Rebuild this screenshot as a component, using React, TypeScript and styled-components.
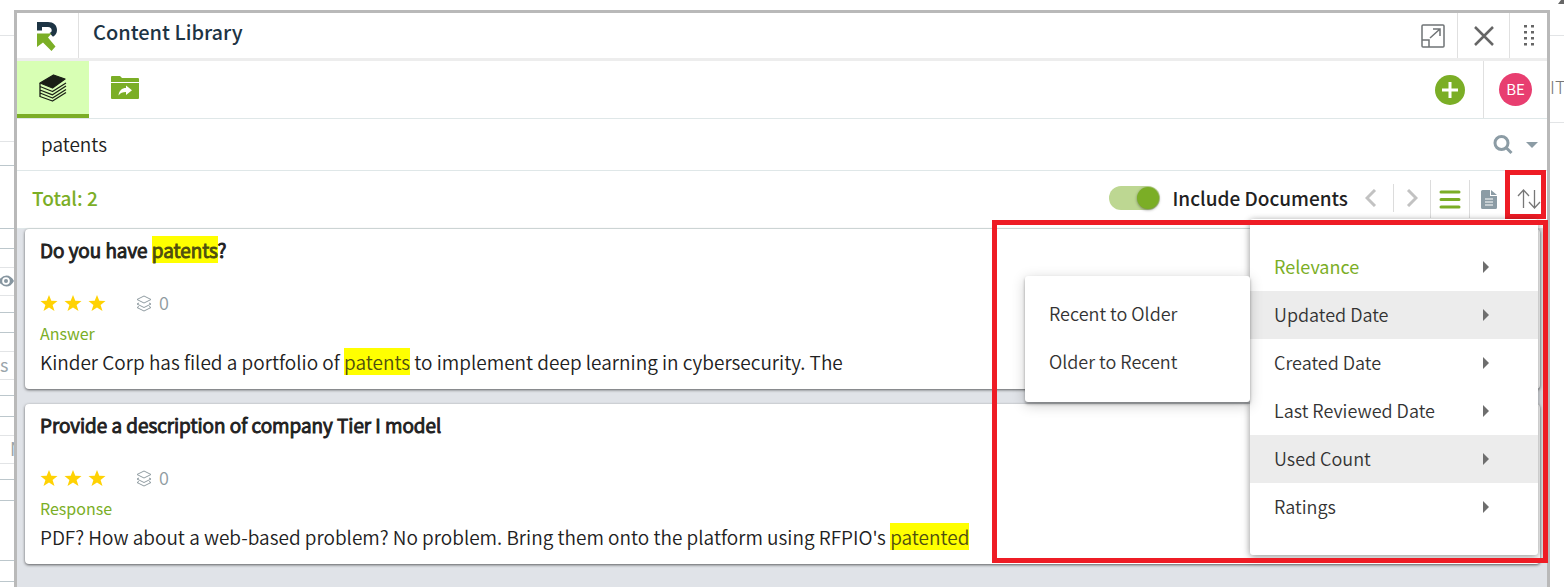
import React from "react";
import styled, { createGlobalStyle, css } from "styled-components";

const green = "#7bae26";

const GlobalStyle = createGlobalStyle`
  *, *::before, *::after { box-sizing: border-box; }
  body {
    margin: 0;
    background: #fff;
    color: #212121;
    font-family: "Noto Sans CJK SC", "Noto Sans", sans-serif;
    font-size: 19px;
    line-height: 24px;
  }
  button, input { font: inherit; color: inherit; }
  h1, h2, p, ul { margin: 0; padding: 0; font: inherit; }
`;

const Page = styled.div`
  display: grid;
  grid-template-columns: 14px minmax(0, 1fr) 14px;
  height: 100vh;
  overflow: hidden;
`;

const Backdrop = styled.div`
  overflow: hidden;
  color: #9aa5ab;
  font-size: 18px;
`;

const Strip = styled.div<{ $h: number; $dark?: boolean; $inset?: boolean }>`
  display: flex;
  align-items: center;
  height: ${(p) => p.$h}px;
  padding: 0 0 3px ${(p) => (p.$inset ? 10 : 0)}px;
  border-bottom: 1px solid ${(p) => (p.$dark ? "#bcc7cc" : "#e2e4e6")};
  white-space: nowrap;
  svg { flex: none; }
`;

const ColumnHead = styled(Strip)`
  padding-top: 16px;
  color: #777;
  font-weight: 300;
`;

const CornerMark = styled.svg`
  display: block;
  margin: 0 0 0 auto;
  align-self: flex-start;
`;

const Panel = styled.main`
  position: relative;
  display: flex;
  flex-direction: column;
  margin-top: 10px;
  border: 3px solid #b9b9b9;
  border-bottom: 0;
  background: #fff;
`;

const Header = styled.header`
  display: flex;
  height: 48px;
  border-bottom: 3px solid #ededed;
`;

const LogoCell = styled.div`
  width: 62px;
  padding: 9px 0 0 18px;
  border-right: 1px solid #e0e0e0;
`;

const Title = styled.h1`
  flex: 1;
  padding: 7px 14px;
  color: #1d3444;
  && {
    font-size: 20px;
    font-weight: 500;
  }
`;

const PlainButton = styled.button`
  display: flex;
  align-items: center;
  justify-content: center;
  padding: 0;
  border: 0;
  background: none;
  cursor: pointer;
`;

const HeaderButton = styled(PlainButton)<{ $w: number; $divided?: boolean }>`
  width: ${(p) => p.$w}px;
  border-left: ${(p) => (p.$divided ? "1px solid #e0e0e0" : "0")};
`;

const TabBar = styled.nav`
  display: flex;
  height: 58px;
  border-bottom: 1px solid #dfe7e8;
`;

const Tab = styled(PlainButton)<{ $active?: boolean }>`
  width: 72px;
  border-bottom: 4px solid ${(p) => (p.$active ? green : "transparent")};
  background: ${(p) => (p.$active ? "#d8ffb4" : "none")};
`;

const TabEnd = styled.div`
  display: flex;
  align-items: center;
  margin-left: auto;
`;

const AddButton = styled(PlainButton)`
  width: 30px;
  height: 30px;
  margin-right: 18px;
  border-radius: 50%;
  background: ${green};
`;

const AvatarCell = styled.div`
  display: flex;
  align-items: center;
  justify-content: center;
  width: 64px;
  height: 100%;
  border-left: 1px solid #e0e0e0;
`;

const Avatar = styled.span`
  width: 33px;
  height: 33px;
  border-radius: 50%;
  background: #e83e70;
  color: #fff;
  font-size: 15px;
  line-height: 32px;
  text-align: center;
`;

const SearchBar = styled.form`
  display: flex;
  align-items: center;
  height: 52px;
  padding: 0 9px 0 24px;
  border-bottom: 1px solid #dfe7e8;
`;

const SearchInput = styled.input`
  flex: 1;
  min-width: 0;
  padding: 0 0 2px;
  border: 0;
  outline: 0;
  background: none;
  font-weight: 350;
`;

const SearchButton = styled(PlainButton)`
  margin-right: 13px;
`;

const Toolbar = styled.div`
  display: flex;
  height: 58px;
  padding-left: 15px;
  border-bottom: 1px solid #dfe7e8;
`;

const Total = styled.p`
  padding-top: 15px;
  color: ${green};
  && { font-weight: 500; }
`;

const Tools = styled.div`
  display: flex;
  align-items: center;
  height: 54px;
  margin-left: auto;
`;

const ToggleLabel = styled.label`
  display: flex;
  align-items: center;
  gap: 12px;
  padding-bottom: 1px;
  font-weight: 500;
`;

const Toggle = styled.input`
  appearance: none;
  width: 51px;
  height: 24px;
  margin: 0;
  padding: 1px;
  border-radius: 12px;
  background: #bdd792;
  display: flex;
  justify-content: flex-end;
  &::before {
    content: "";
    width: 22px;
    height: 22px;
    border-radius: 50%;
    background: ${green};
    box-shadow: 0 1px 3px rgba(0, 0, 0, 0.4);
  }
`;

const Tool = styled(PlainButton)<{ $w: number; $line?: "short" | "tall" }>`
  width: ${(p) => p.$w}px;
  height: ${(p) => (p.$line === "tall" ? 38 : 28)}px;
  border-left: ${(p) => (p.$line ? "1px solid #dcdcdc" : "0")};
  ${(p) => p.$line === "tall" && css`align-self: flex-start; margin-top: 9px;`}
`;

const SortArea = styled.div`
  position: relative;
  display: flex;
  align-self: flex-start;
`;

const SortButton = styled(Tool)`
  padding-left: 2px;
`;

const Highlight = styled.div`
  position: absolute;
  top: -1px;
  right: 1px;
  width: 41px;
  height: 49px;
  border: 5px solid #ee1c25;
  pointer-events: none;
`;

const Region = styled.div`
  position: absolute;
  z-index: 3;
  top: 207px;
  right: -1px;
  width: 556px;
  height: 343px;
  border: 5px solid #ee1c25;
  pointer-events: none;
`;

const menuSurface = css`
  position: absolute;
  list-style: none;
  border-radius: 3px;
  background: #fff;
`;

const Menu = styled.ul`
  ${menuSurface}
  z-index: 2;
  top: 48px;
  right: 9px;
  width: 288px;
  && { padding: 24px 0; }
  box-shadow: 0 1px 6px rgba(0, 0, 0, 0.35), 0 4px 12px rgba(0, 0, 0, 0.12);
`;

const MenuItem = styled.li<{ $shaded?: boolean }>`
  position: relative;
  background: ${(p) => (p.$shaded ? "#ececec" : "none")};
`;

const MenuButton = styled.button<{ $selected?: boolean }>`
  display: flex;
  align-items: center;
  justify-content: space-between;
  width: 100%;
  height: 48px;
  padding: 0 48px 2px 24px;
  border: 0;
  background: none;
  color: ${(p) => (p.$selected ? green : "#333")};
  font-size: 18px;
  font-weight: ${(p) => (p.$selected ? 400 : 350)};
  text-align: left;
  white-space: nowrap;
`;

const SubMenu = styled.ul`
  ${menuSurface}
  top: -15px;
  right: 100%;
  width: 225px;
  && { padding: 14px 0 16px; }
  box-shadow: 0 2px 3px rgba(0, 0, 0, 0.35), 0 3px 14px rgba(0, 0, 0, 0.2);
`;

const Results = styled.section`
  display: flex;
  flex: 1;
  flex-direction: column;
  gap: 15px;
  padding: 0 7px 0 8px;
  background: #e0e3e8;
`;

const Card = styled.article`
  height: 160px;
  padding: 9px 15px;
  border-radius: 4px;
  background: #fff;
  box-shadow: 0 1px 3px rgba(0, 0, 0, 0.6);
`;

const Question = styled.h2`
  && { font-weight: 350; }
  -webkit-text-stroke: 1px currentColor;
`;

const Rating = styled.div`
  display: flex;
  align-items: center;
  gap: 6px;
  height: 24px;
  margin-top: 29px;
  color: #8f9ba1;
  font-size: 18px;
  font-weight: 350;
`;

const Uses = styled.span`
  display: flex;
  align-items: center;
  gap: 7px;
  margin-left: 24px;
  padding-bottom: 3px;
`;

const Kind = styled.p`
  margin-top: 6px;
  color: ${green};
  && { font-size: 16px; }
`;

const Answer = styled.p`
  margin-top: 5px;
  && { font-weight: 350; }
`;

const Mark = styled.mark`
  background: #ff0;
  color: #4f4f10;
`;

const Star = () => (
  <svg width="18" height="18" viewBox="0 -1 18 18" aria-hidden="true">
    <path d="M9 0l2.300 5.800 6.200.2-4.900 3.900 1.900 6.100L9 12.600 3.500 16l1.900-6.100L.5 6l6.200-.2z" fill="#ffd203" />
  </svg>
);

const Layers = () => (
  <svg width="16" height="22" viewBox="0 -5 16 22" fill="none" stroke="#8f9ba1" strokeLinejoin="round" aria-hidden="true">
    <path d="M8 0l7 3.500L8 7 1 3.500zM3 7L1 8l7 3.500L15 8l-2-1M3 10.500l-2 1L8 15l7-3.500-2-1" />
  </svg>
);

const Caret = () => (
  <svg width="7" height="14" viewBox="0 -2 7 14" aria-hidden="true">
    <path d="M0 0l6 6-6 6z" fill="#6e6e6e" />
  </svg>
);

const StackIcon = () => (
  <svg width="28" height="28" viewBox="0 0 28 28" fill="none" stroke="#1a1f16" strokeWidth="1.300" strokeLinejoin="round" aria-hidden="true">
    <path d="M1 9L14.500 1 26 5 13.500 14z" fill="#1a1f16" />
    <path d="M1 9v13.500l12.500 4.500L27 18.500M1 12.500l12.500 5L27 9M1 16l12.500 4.800L27 12M1 19l12.500 5L27 15.500" />
  </svg>
);

const FolderIcon = () => (
  <svg width="28" height="24" viewBox="0 0 28 24" aria-hidden="true">
    <path d="M0 1q0-1 1-1h8l2 2h16q1 0 1 1v3H0zM0 7h28v15q0 1-1 1H1q-1 0-1-1z" fill={green} />
    <path d="M7.500 19.500c.5-5 3.500-7.500 7.500-7.500V9.500l6 4.800-6 4.700v-3c-3.500 0-5.500.8-7.500 3.500z" fill="#fff" />
  </svg>
);

const backdropRows: [number, boolean, React.ReactNode?, boolean?][] = [
  [36, false], [106, false], [24, true], [63, true], [20, true], [19, false],
  [28, false, "eye"], [17, true], [20, true], [19, false], [28, false, "s"], [16, true],
  [21, true], [19, false], [28, false, "N", true], [16, true], [21, true], [60, true], [21, true],
];

const sortOptions = ["Relevance", "Updated Date", "Created Date", "Last Reviewed Date", "Used Count", "Ratings"];

const Eye = () => (
  <svg width="14" height="16" viewBox="0 -2 14 16" aria-hidden="true">
    <path d="M-2 7Q2 1.500 6.500 1.500T14 7q-3 5.500-7.500 5.500T-2 7z" fill="#8796a0" />
    <circle cx="6" cy="7" r="3.800" fill="#fff" />
    <circle cx="6" cy="7" r="2" fill="#8796a0" />
  </svg>
);

function Result({ title, kind, children }: { title: React.ReactNode; kind: string; children: React.ReactNode }) {
  return (
    <Card>
      <Question>{title}</Question>
      <Rating>
        <Star /><Star /><Star />
        <Uses><Layers />0</Uses>
      </Rating>
      <Kind>{kind}</Kind>
      <Answer>{children}</Answer>
    </Card>
  );
}

export default function App() {
  return (
    <Page>
      <GlobalStyle />
      <Backdrop>
        {backdropRows.map(([h, dark, content, inset], i) => (
          <Strip key={i} $h={h} $dark={dark} $inset={inset}>{content === "eye" ? <Eye /> : content}</Strip>
        ))}
      </Backdrop>

      <Panel>
        <Header>
          <LogoCell>
            <svg width="24" height="30" viewBox="0 0 24 30" role="img" aria-label="RFPIO">
              <path d="M2 0h11c5.500 0 9 3 9 8 0 3-1.500 5.500-4 6.800L14.500 11c1.500-.5 2.200-1.500 2.200-2.800C16.700 6.300 15.300 5 13 5H7v3.500H2z" fill="#1d3444" />
              <path d="M2 11.500h14.500L13 15.500l7.500 9-4 4.500-8.500-8.500-6 4.500z" fill={green} />
            </svg>
          </LogoCell>
          <Title>Content Library</Title>
          <HeaderButton $w={49} aria-label="Expand">
            <svg width="24" height="24" viewBox="0 0 24 24" fill="none" stroke="#6f7375" strokeWidth="1.500">
              <rect x="1" y="1" width="22" height="22" rx="1" />
              <path d="M1 16h7v7M9 14L19 5M12 5h7v7" />
            </svg>
          </HeaderButton>
          <HeaderButton $w={52} $divided aria-label="Close">
            <svg width="20" height="20" viewBox="0 0 20 20" stroke="#666" strokeWidth="2.500">
              <path d="M1 1l18 18M19 1L1 19" />
            </svg>
          </HeaderButton>
          <HeaderButton $w={38} $divided aria-label="Move">
            <svg width="10" height="22" viewBox="0 0 10 22" fill="#666">
              {[0, 6, 12, 18].map((y) => (
                <g key={y}><rect y={y} width="3" height="2.500" /><rect x="7" y={y} width="3" height="2.500" /></g>
              ))}
            </svg>
          </HeaderButton>
        </Header>

        <TabBar>
          <Tab $active aria-label="Library"><StackIcon /></Tab>
          <Tab aria-label="Shared folder"><FolderIcon /></Tab>
          <TabEnd>
            <AddButton aria-label="Add">
              <svg width="16" height="16" viewBox="0 0 16 16" stroke="#fff" strokeWidth="3"><path d="M8 0v16M0 8h16" /></svg>
            </AddButton>
            <AvatarCell><Avatar>BE</Avatar></AvatarCell>
          </TabEnd>
        </TabBar>

        <SearchBar onSubmit={(e) => e.preventDefault()}>
          <SearchInput aria-label="Search" defaultValue="patents" />
          <SearchButton aria-label="Search">
            <svg width="20" height="20" viewBox="0 0 20 20" fill="none" stroke="#8c9ca5" strokeWidth="3">
              <circle cx="8.500" cy="8" r="6.500" /><path d="M13 12.500l5.500 5.500" />
            </svg>
          </SearchButton>
          <PlainButton type="button" aria-label="Search options">
            <svg width="12" height="6" viewBox="0 0 12 6"><path d="M0 0h12L6 6z" fill="#8c9ca5" /></svg>
          </PlainButton>
        </SearchBar>

        <Toolbar>
          <Total>Total: 2</Total>
          <Tools>
            <ToggleLabel><Toggle type="checkbox" defaultChecked />Include Documents</ToggleLabel>
            <Tool $w={45} aria-label="Previous">
              <svg width="12" height="18" viewBox="0 0 12 18" fill="none" stroke="#c2c2c2" strokeWidth="3"><path d="M10 1L2 9l8 8" /></svg>
            </Tool>
            <Tool $w={37} $line="short" aria-label="Next">
              <svg width="12" height="18" viewBox="0 0 12 18" fill="none" stroke="#c2c2c2" strokeWidth="3"><path d="M2 1l8 8-8 8" /></svg>
            </Tool>
            <Tool $w={39} $line="tall" aria-label="List view">
              <svg width="22" height="19" viewBox="0 0 22 19" stroke={green} strokeWidth="3" strokeLinecap="round"><path d="M2 2h18M2 9.500h18M2 17h18" /></svg>
            </Tool>
            <Tool $w={38} $line="tall" aria-label="Document view">
              <svg width="16" height="19" viewBox="0 0 16 19">
                <path d="M0 1.500Q0 0 1.500 0H9v6h7v11.500q0 1.500-1.500 1.500h-13Q0 19 0 17.500zM10 0l6 5h-6z" fill="#8c9ca5" />
                <path d="M4 9h8M4 12h8M4 15h8" stroke="#fff" strokeWidth="1.200" />
              </svg>
            </Tool>
            <SortArea>
              <SortButton $w={40} $line="tall" aria-label="Sort" aria-haspopup="menu">
                <svg width="24" height="20" viewBox="0 0 24 20" fill="none" stroke="#777" strokeWidth="1.300"><path d="M6.500 19V1M1 7l5.500-6L12 7M17.500 1v18M12 13l5.500 6 5.500-6" /></svg>
              </SortButton>
              <Highlight />
              <Menu>
                {sortOptions.map((name) => (
                  <MenuItem key={name} $shaded={name === "Updated Date" || name === "Used Count"}>
                    <MenuButton $selected={name === "Relevance"}>{name}<Caret /></MenuButton>
                    {name === "Updated Date" && (
                      <SubMenu>
                        <li><MenuButton>Recent to Older</MenuButton></li>
                        <li><MenuButton>Older to Recent</MenuButton></li>
                      </SubMenu>
                    )}
                  </MenuItem>
                ))}
              </Menu>
            </SortArea>
          </Tools>
        </Toolbar>

        <Results>
          <Result title={<>Do you have <Mark>patents</Mark>?</>} kind="Answer">
            Kinder Corp has filed a portfolio of <Mark>patents</Mark> to implement deep learning in cybersecurity. The
          </Result>
          <Result title="Provide a description of company Tier I model" kind="Response">
            PDF? How about a web-based problem? No problem. Bring them onto the platform using RFPIO's <Mark>patented</Mark>
          </Result>
        </Results>
        <Region />
      </Panel>

      <Backdrop>
        <Strip $h={36}>
          <CornerMark width="6" height="4" viewBox="0 0 6 4"><path d="M0 4L3 0h3v4z" fill="#666" /></CornerMark>
        </Strip>
        <ColumnHead $h={87}>IT</ColumnHead>
      </Backdrop>
    </Page>
  );
}
